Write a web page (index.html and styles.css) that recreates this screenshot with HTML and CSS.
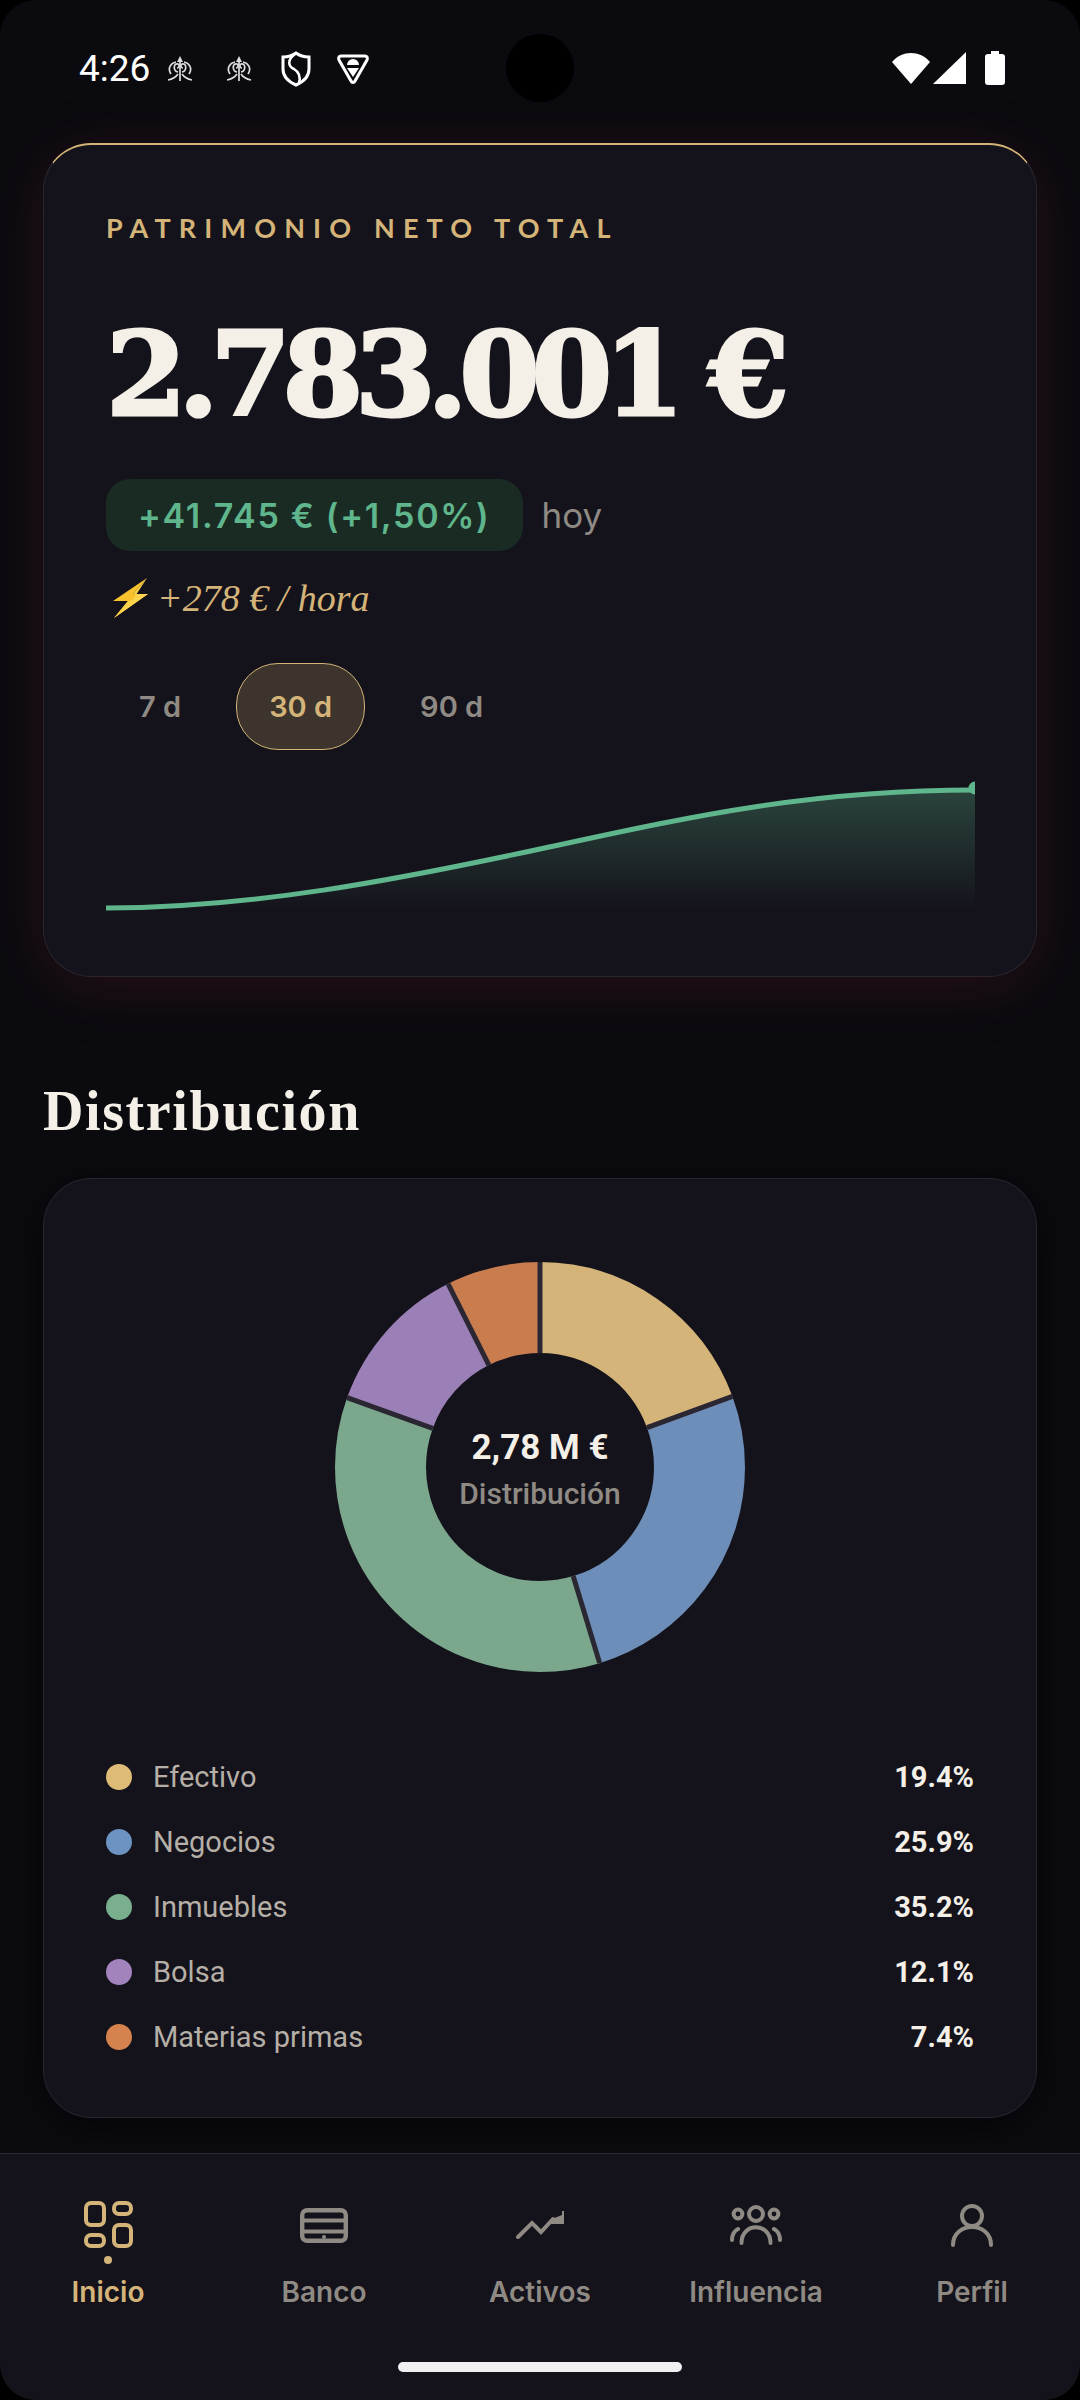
FILE: index.html
```html
<!DOCTYPE html>
<html lang="es">

<head>
    <meta charset="UTF-8">
    <meta name="viewport" content="width=device-width, initial-scale=1.0">
    <title>Patrimonio</title>
    <link rel="stylesheet" href="styles.css">
</head>

<body>
    <div class="screen">
        <div class="status-bar">
            <div class="status-left">
                <span class="clock">4:26</span>
                <svg class="notif first" viewBox="0 0 26 26"><g fill="none" stroke="#ddd" stroke-width="1.7"><path d="M13 4v21M1 24c5-1 8-3 10-6M25 24c-5-1-8-3-10-6"/><path d="M11 16C6 15 6 7 11 8c2 1 1 4-1 4M15 16c5-1 5-9 0-8-2 1-1 4 1 4"/><path d="M4 18C0 12 4 7 9 6M22 18c4-6 0-11-5-12"/></g><path d="M13 0l3 6h-6z" fill="#ddd"/></svg>
                <svg class="notif second" viewBox="0 0 26 26"><g fill="none" stroke="#ddd" stroke-width="1.7"><path d="M13 4v21M1 24c5-1 8-3 10-6M25 24c-5-1-8-3-10-6"/><path d="M11 16C6 15 6 7 11 8c2 1 1 4-1 4M15 16c5-1 5-9 0-8-2 1-1 4 1 4"/><path d="M4 18C0 12 4 7 9 6M22 18c4-6 0-11-5-12"/></g><path d="M13 0l3 6h-6z" fill="#ddd"/></svg>
                <svg class="notif shield" viewBox="0 0 30 36"><path d="M15 2c4 3 8 4 13 4v12c0 8-6 13-13 16C8 31 2 26 2 18V6c5 0 9-1 13-4z" fill="none" stroke="#fff" stroke-width="3"/><path d="M14 3C6 9 7 15 13 18c5 3 7 7 5 14" fill="none" stroke="#fff" stroke-width="2.6"/></svg>
                <svg class="notif vpn" viewBox="0 0 34 32"><path d="M5 3h24c2 0 3 2 2 4L19 28c-1 2-3 2-4 0L3 7C2 5 3 3 5 3z" fill="none" stroke="#fff" stroke-width="3"/><path d="M11 12a6 6 0 0 1 12 0z" fill="#fff"/><path d="M11 15h12l-6 9z" fill="#fff"/></svg>
            </div>
            <div class="camera"></div>
            <div class="status-right">
                <svg class="wifi" viewBox="0 0 38 31"><path d="M19 31L0 9C5 3 12 0 19 0s14 3 19 9z" fill="#fff"/></svg>
                <svg class="signal" viewBox="0 0 33 32"><path d="M33 0v32H0z" fill="#fff"/></svg>
                <svg class="battery" viewBox="0 0 20 34"><path d="M6 0h8v3h3c2 0 3 1 3 3v25c0 2-1 3-3 3H3c-2 0-3-1-3-3V6c0-2 1-3 3-3h3z" fill="#fff"/></svg>
            </div>
        </div>

        <main class="content">
            <section class="card hero">
                <div class="hero-label">PATRIMONIO NETO TOTAL</div>
                <div class="hero-total">2.783.001 <span class="euro">€</span></div>
                <div class="change-row">
                    <span class="change-pill">+41.745 € (+1,50%)</span>
                    <span class="change-when">hoy</span>
                </div>
                <div class="rate">
                    <svg class="bolt" viewBox="0 0 36 40"><path d="M35 0L1 23h15L2 40l34-24H21z" fill="#f8c22f"/><path d="M35 0L21 16h15L2 40l14-17h4z" fill="#fcd34d"/></svg>
                    <span>+278 € / hora</span>
                </div>
                <div class="range-tabs">
                    <span class="range-tab">7 d</span>
                    <span class="range-tab active">30 d</span>
                    <span class="range-tab">90 d</span>
                </div>
                <svg class="spark" viewBox="0 0 869 140">
                    <defs>
                        <linearGradient id="sparkFill" x1="0" y1="0" x2="0" y2="1">
                            <stop offset="0" stop-color="#5fb58c" stop-opacity="0.3"/>
                            <stop offset="1" stop-color="#5fb58c" stop-opacity="0"/>
                        </linearGradient>
                    </defs>
                    <path d="M0 128C145 128 290 100 434 69C578 38 700 10 869 10V130H0Z" fill="url(#sparkFill)"/>
                    <path d="M0 128C145 128 290 100 434 69C578 38 700 10 869 10" fill="none" stroke="#5fb58c" stroke-width="5"/>
                    <circle cx="869" cy="8" r="6.5" fill="#5fb58c"/>
                </svg>
            </section>

            <h2 class="section-title">Distribución</h2>

            <section class="card dist">
                <div class="donut-wrap">
                    <svg class="donut" viewBox="-205 -205 410 410">
                        <g fill="none" stroke-width="91" transform="rotate(-90)">
                            <circle r="159.5" pathLength="100" stroke="#d4b479" stroke-dasharray="19.4 100"/>
                            <circle r="159.5" pathLength="100" stroke="#6d8eb8" stroke-dasharray="25.9 100" stroke-dashoffset="-19.4"/>
                            <circle r="159.5" pathLength="100" stroke="#7ba88c" stroke-dasharray="35.2 100" stroke-dashoffset="-45.3"/>
                            <circle r="159.5" pathLength="100" stroke="#9b80b8" stroke-dasharray="12.1 100" stroke-dashoffset="-80.5"/>
                            <circle r="159.5" pathLength="100" stroke="#c97d4f" stroke-dasharray="7.4 100" stroke-dashoffset="-92.6"/>
                        </g>
                        <g stroke="#2a2733" stroke-width="5">
                            <line y1="-114" y2="-205"/>
                            <line y1="-114" y2="-205" transform="rotate(69.84)"/>
                            <line y1="-114" y2="-205" transform="rotate(163.08)"/>
                            <line y1="-114" y2="-205" transform="rotate(289.8)"/>
                            <line y1="-114" y2="-205" transform="rotate(333.36)"/>
                        </g>
                    </svg>
                    <div class="donut-center">
                        <div class="donut-value">2,78 M €</div>
                        <div class="donut-label">Distribución</div>
                    </div>
                </div>
                <ul class="legend">
                    <li><i class="dot dot-gold"></i><span class="legend-name">Efectivo</span><b>19.4%</b></li>
                    <li><i class="dot dot-blue"></i><span class="legend-name">Negocios</span><b>25.9%</b></li>
                    <li><i class="dot dot-green"></i><span class="legend-name">Inmuebles</span><b>35.2%</b></li>
                    <li><i class="dot dot-purple"></i><span class="legend-name">Bolsa</span><b>12.1%</b></li>
                    <li><i class="dot dot-orange"></i><span class="legend-name">Materias primas</span><b>7.4%</b></li>
                </ul>
            </section>
        </main>

        <nav class="bottom-nav">
            <div class="nav-items">
                <div class="nav-item active">
                    <div class="nav-icon">
                        <svg width="49" height="48" viewBox="0 0 49 48" fill="none" stroke="currentColor" stroke-width="4"><rect x="2" y="2" width="18" height="22" rx="5"/><rect x="30" y="2" width="17" height="11" rx="5"/><rect x="30" y="24" width="17" height="21" rx="5"/><rect x="2" y="34" width="18" height="11" rx="5"/></svg>
                        <i class="nav-dot"></i>
                    </div>
                    <span>Inicio</span>
                </div>
                <div class="nav-item">
                    <div class="nav-icon">
                        <svg width="48" height="35" viewBox="0 0 48 35" fill="none" stroke="currentColor" stroke-width="4.4"><rect x="2.2" y="2.2" width="43.6" height="30.6" rx="5"/><path d="M2 12.5h44M2 23.5h44" stroke-width="4"/><circle cx="24" cy="29" r="2" fill="currentColor" stroke="none"/></svg>
                    </div>
                    <span>Banco</span>
                </div>
                <div class="nav-item">
                    <div class="nav-icon">
                        <svg width="48" height="28" viewBox="0 0 48 28" fill="none" stroke="currentColor" stroke-width="4" stroke-linecap="round"><path d="M2 26L16 12l9 9 12-13"/><path d="M36 8l10-4V0h2v13H35z" fill="currentColor" stroke="none"/></svg>
                    </div>
                    <span>Activos</span>
                </div>
                <div class="nav-item">
                    <div class="nav-icon">
                        <svg width="52" height="41" viewBox="0 0 52 41" fill="none" stroke="currentColor" stroke-width="4" stroke-linecap="round"><circle cx="26" cy="9" r="7"/><circle cx="8" cy="9" r="4.4"/><circle cx="44" cy="9" r="4.4"/><path d="M11.5 38C11.5 17 40.5 17 40.5 38"/><path d="M2 35c0-5 2-9 6-11M50 35c0-5-2-9-6-11"/></svg>
                    </div>
                    <span>Influencia</span>
                </div>
                <div class="nav-item">
                    <div class="nav-icon">
                        <svg width="42" height="43" viewBox="0 0 42 43" fill="none" stroke="currentColor" stroke-width="4" stroke-linecap="round"><circle cx="21" cy="12" r="10"/><path d="M2 41C2 17 40 17 40 41"/></svg>
                    </div>
                    <span>Perfil</span>
                </div>
            </div>
            <div class="home-bar"></div>
        </nav>
    </div>
</body>

</html>
```
FILE: styles.css
```css
* {
    box-sizing: border-box;
}

body {
    margin: 0;
    background-color: #000;
    font-family: Roboto, sans-serif;
}

.screen {
    width: 1080px;
    height: 2400px;
    background-color: #0a0a0f;
    border-radius: 36px;
    overflow: hidden;
    display: flex;
    flex-direction: column;
    position: relative;
}

/* status bar */
.status-bar {
    height: 143px;
    flex-shrink: 0;
    padding: 47px 75px 0 79px;
    display: flex;
    justify-content: space-between;
    align-items: flex-start;
    color: #fff;
}

.status-left {
    display: flex;
    align-items: center;
    height: 44px;
}

.clock {
    font-size: 37px;
    line-height: 44px;
}

.notif {
    width: 26px;
    height: 26px;
}

.notif.first {
    margin-left: 17px;
}

.notif.second {
    margin-left: 33px;
}

.notif.shield {
    width: 30px;
    height: 36px;
    margin-left: 29px;
}

.notif.vpn {
    width: 34px;
    height: 32px;
    margin-left: 25px;
}

.camera {
    position: absolute;
    left: 506px;
    top: 34px;
    width: 68px;
    height: 68px;
    border-radius: 50%;
    background-color: #000;
}

.status-right {
    display: flex;
    align-items: center;
    height: 42px;
}

.wifi {
    width: 38px;
    height: 31px;
}

.signal {
    width: 33px;
    height: 32px;
    margin-left: 3px;
}

.battery {
    width: 20px;
    height: 34px;
    margin-left: 19px;
}

/* cards */
.content {
    flex: 1;
    padding: 0 43px;
}

.card {
    background-color: #14131b;
    border: 1px solid #2a2630;
    border-radius: 48px;
}

.hero {
    height: 834px;
    padding: 67px 62px 0;
    border-top: 2px solid #d4b479;
    box-shadow: 0 10px 60px rgba(130, 40, 50, 0.24);
}

.hero-label {
    font-family: Lato, sans-serif;
    font-weight: 700;
    font-size: 27px;
    line-height: 32px;
    letter-spacing: 8.15px;
    color: #d4b479;
}

.hero-total {
    margin-top: 66px;
    font-family: "DejaVu Serif", serif;
    font-weight: 700;
    font-size: 116px;
    line-height: 128px;
    letter-spacing: -8.4px;
    white-space: nowrap;
    color: #f4f0e8;
    -webkit-text-stroke: 3px #f4f0e8;
}

.euro {
    letter-spacing: 0;
}

.change-row {
    margin-top: 41px;
    display: flex;
    align-items: center;
    gap: 19px;
}

.change-pill {
    height: 72px;
    padding: 0 32px;
    display: flex;
    align-items: center;
    background-color: #1a2b23;
    border-radius: 24px;
    font-family: Inter, sans-serif;
    font-weight: 600;
    font-size: 34px;
    letter-spacing: 1.7px;
    color: #5fb58c;
}

.change-when {
    font-family: Inter, sans-serif;
    font-size: 35px;
    color: #8f8a83;
}

.rate {
    margin-top: 25px;
    height: 44px;
    display: flex;
    align-items: center;
    gap: 9px;
    font-family: "Liberation Serif", serif;
    font-style: italic;
    font-size: 38px;
    color: #d4b479;
}

.bolt {
    width: 36px;
    height: 40px;
    margin-left: 6px;
}

.range-tabs {
    margin-top: 43px;
    display: flex;
}

.range-tab {
    height: 87px;
    padding: 0 32px;
    display: flex;
    align-items: center;
    border: 1px solid transparent;
    border-radius: 42px;
    font-family: Inter, sans-serif;
    font-weight: 600;
    font-size: 29px;
    color: #8f8a83;
}

.range-tab.active {
    background-color: #3c342d;
    border-color: #d4b479;
    color: #d4b479;
    margin: 0 22px;
}

.spark {
    display: block;
    margin-top: 30px;
    width: 869px;
    height: 140px;
}

.section-title {
    margin: 104px 0 37px;
    font-family: "Liberation Serif", serif;
    font-weight: 700;
    font-size: 56px;
    line-height: 60px;
    letter-spacing: 1.6px;
    color: #f4f0e8;
}

.dist {
    height: 940px;
    padding: 83px 62px 0;
    box-shadow: 0 8px 32px rgba(0, 0, 0, 0.4);
}

.donut-wrap {
    width: 410px;
    height: 410px;
    margin: 0 auto;
    position: relative;
}

.donut {
    display: block;
    width: 410px;
    height: 410px;
}

.donut-center {
    position: absolute;
    inset: 0;
    padding-top: 5px;
    display: flex;
    flex-direction: column;
    align-items: center;
    justify-content: center;
}

.donut-value {
    font-weight: 700;
    font-size: 35px;
    line-height: 42px;
    color: #f4f0e8;
}

.donut-label {
    margin-top: 6px;
    font-weight: 500;
    font-size: 30px;
    line-height: 38px;
    color: #8f8a83;
}

.legend {
    list-style: none;
    margin: 72px 0 0;
    padding: 0;
}

.legend li {
    height: 65.2px;
    display: flex;
    align-items: center;
    font-size: 29px;
    color: #b5afa7;
}

.dot {
    width: 26px;
    height: 26px;
    border-radius: 50%;
    margin-right: 21px;
}

.dot-gold { background-color: #dfbb78; }
.dot-blue { background-color: #6d93c2; }
.dot-green { background-color: #79ae8e; }
.dot-purple { background-color: #a283be; }
.dot-orange { background-color: #d5824f; }

.legend-name {
    flex: 1;
}

.legend b {
    font-weight: 700;
    font-size: 29px;
    color: #f4f0e8;
}

/* bottom nav */
.bottom-nav {
    height: 247px;
    flex-shrink: 0;
    background-color: #14131b;
    border-top: 1px solid #2a2a30;
    position: relative;
}

.nav-items {
    padding: 47px 0 0;
    display: grid;
    grid-template-columns: repeat(5, 216px);
}

.nav-item {
    display: flex;
    flex-direction: column;
    align-items: center;
    gap: 26px;
    font-family: Inter, sans-serif;
    font-weight: 600;
    font-size: 28px;
    line-height: 34px;
    color: #8f8a83;
}

.nav-item.active {
    color: #d4b479;
}

.nav-icon {
    height: 48px;
    display: flex;
    align-items: center;
    position: relative;
}

.nav-dot {
    position: absolute;
    left: 50%;
    bottom: -15px;
    width: 8px;
    height: 8px;
    margin-left: -4px;
    border-radius: 50%;
    background-color: #d4b479;
}

.home-bar {
    position: absolute;
    left: 398px;
    bottom: 28px;
    width: 284px;
    height: 10px;
    border-radius: 5px;
    background-color: #f0f0f0;
}
```
